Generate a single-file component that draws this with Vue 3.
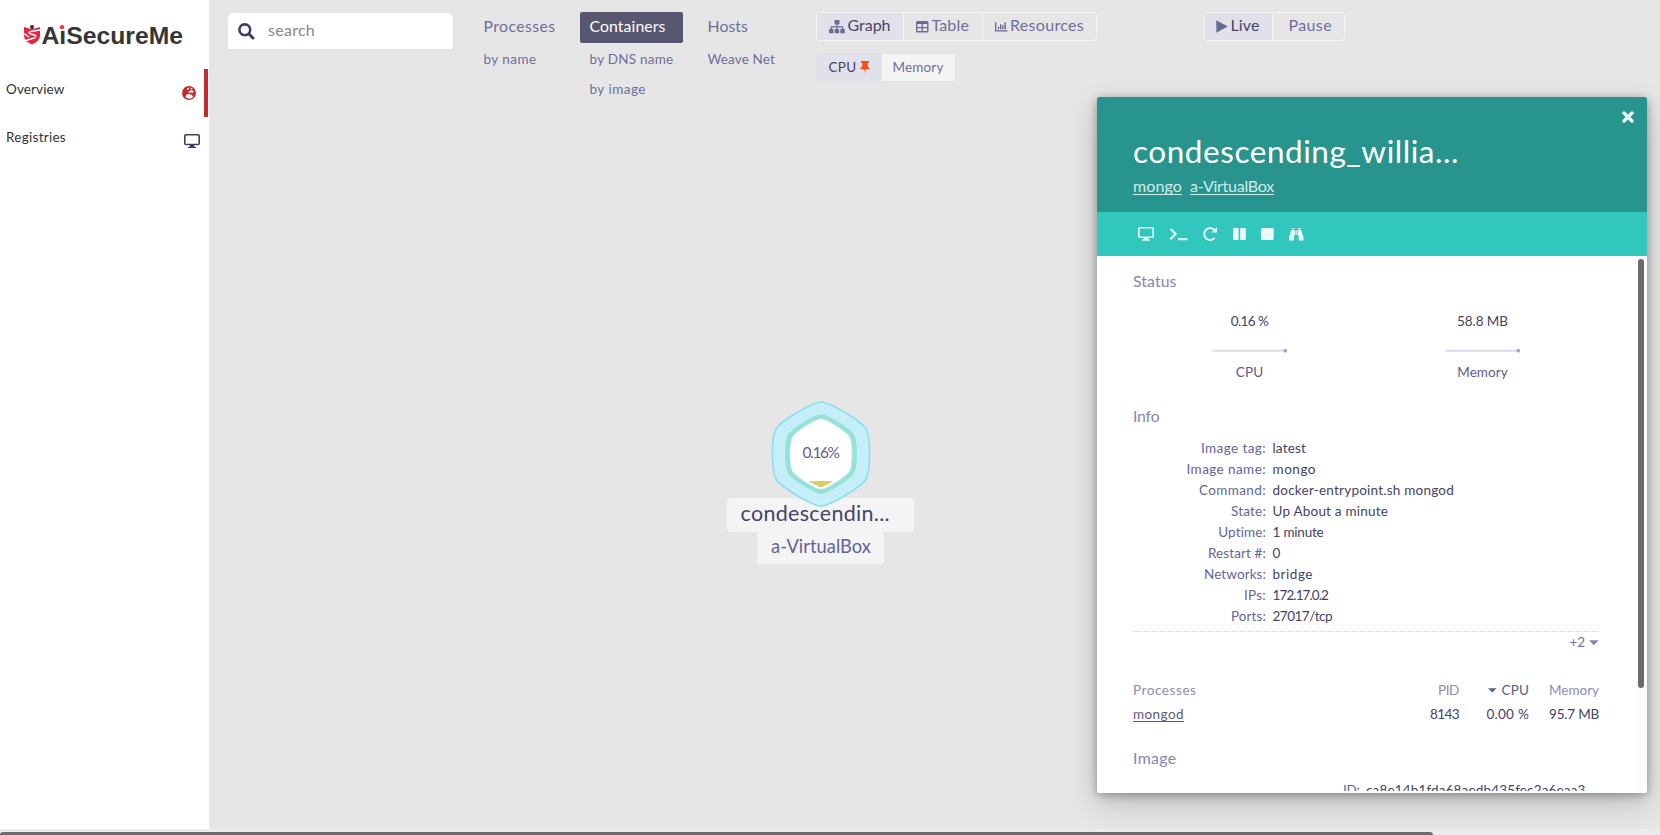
<script setup>
// Spreads a label's letters so that it fills the given width in pixels.
const vFit = {
  mounted(el, { value }) {
    const count = el.textContent.length
    const natural = el.getBoundingClientRect().width
    if (count && natural) el.style.letterSpacing = `${((value - natural) / count).toFixed(3)}px`
  },
}

const topologies = [
  { name: 'Processes', w: 72, subs: [{ name: 'by name', w: 53 }] },
  { name: 'Containers', w: 76, active: true, subs: [{ name: 'by DNS name', w: 84 }, { name: 'by image', w: 56.5 }] },
  { name: 'Hosts', w: 40.5, subs: [{ name: 'Weave Net', w: 67.5 }] },
]
const metrics = [
  { label: 'CPU', lw: 27.5, value: '0.16 %', vw: 37.5 },
  { label: 'Memory', lw: 50.5, value: '58.8 MB', vw: 51 },
]
const info = [
  { label: 'Image tag:', lw: 65, value: 'latest', vw: 33.5 },
  { label: 'Image name:', lw: 79.5, value: 'mongo', vw: 43.5 },
  { label: 'Command:', lw: 67, value: 'docker-entrypoint.sh mongod', vw: 181.5 },
  { label: 'State:', lw: 35, value: 'Up About a minute', vw: 115.5 },
  { label: 'Uptime:', lw: 48, value: '1 minute', vw: 51 },
  { label: 'Restart #:', lw: 58, value: '0', vw: 9 },
  { label: 'Networks:', lw: 62, value: 'bridge', vw: 40.5 },
  { label: 'IPs:', lw: 22, value: '172.17.0.2', vw: 55.5 },
  { label: 'Ports:', lw: 35, value: '27017/tcp', vw: 59.5 },
]
const hexPath = 'M0 -52 C8 -52 40 -33.5 45 -25 C49.8 -16 49.8 16 45 25 C40 33.5 8 52 0 52 C-8 52 -40 33.5 -45 25 C-49.8 16 -49.8 -16 -45 -25 C-40 -33.5 -8 -52 0 -52Z'
</script>

<template>
  <div class="page">
    <aside class="sidebar">
      <svg class="logo" width="170" height="30" viewBox="0 0 170 30">
        <path d="M1 7 L8 9 L9 6 L10 9 L17 7 L17 15 C17 20 13 23 9 24.500 C5 23 1 20 1 15Z" fill="#e9243d" />
        <circle cx="9" cy="7" r="2" fill="#333" />
        <path d="M17 10 L8 11.500 Q4 12.500 8 14 L12 15.200 Q14 16.500 11 18 L3 20.500 M1 13.500 L6 17" fill="none" stroke="#fff" stroke-width="1.500" />
        <text class="logo-text" x="18.500" y="23.500" textLength="141.500" lengthAdjust="spacingAndGlyphs">AiSecureMe</text>
        <rect x="35.800" y="4" width="6" height="5" fill="#fff" />
        <circle cx="39" cy="7.200" r="2.100" fill="#f0323c" />
      </svg>
      <a class="side-item active">
        <span v-fit="58.5">Overview</span>
        <svg class="ico-globe" width="14" height="14" viewBox="0 0 14 14">
          <circle cx="7" cy="7" r="7" fill="#c62c2b" />
          <path d="M5 2.200L7.200 1.400L6.600 3.300L5 4.300z M8.300 1.600L10.800 2.700L9.200 3.800z M7 5L9.500 4.200L11.600 5L11 6.800L8.600 6.400L6.600 7.200z M4.200 8.800L6.600 8L10 9L11.200 11L9 12.600H5.800L3.600 11z" fill="#fff" />
        </svg>
      </a>
      <a class="side-item">
        <span v-fit="60">Registries</span>
        <svg class="ico-desktop" width="16" height="15" viewBox="0 0 16 15">
          <rect x=".8" y=".8" width="14.400" height="9.700" rx="1" fill="none" stroke="#3f3f66" stroke-width="1.600" />
          <path d="M6 11h4l.6 2H12v1H4v-1h1.400z" fill="#3f3f66" />
        </svg>
      </a>
    </aside>

    <main class="scope">
      <header class="topbar">
        <div class="search">
          <svg width="17" height="17" viewBox="0 0 17 17" fill="none" stroke="#3f3f66">
            <circle cx="6.800" cy="6.800" r="5.400" stroke-width="2.600" />
            <path d="M11 11 L15 15" stroke-width="3" stroke-linecap="round" />
          </svg>
          <span v-fit="47">search</span>
        </div>
        <nav class="topologies">
          <div v-for="t in topologies" :key="t.name" class="topology">
            <div class="topo-main" :class="{ active: t.active }"><span v-fit="t.w">{{ t.name }}</span></div>
            <div v-for="s in t.subs" :key="s.name" class="topo-sub"><span v-fit="s.w">{{ s.name }}</span></div>
          </div>
        </nav>
        <div class="views">
          <div class="segments">
            <div class="segment on graph">
              <svg width="16" height="14" viewBox="0 0 16 14" fill="#6a6a99">
                <rect x="5.500" y="0" width="5" height="4.500" rx=".7" />
                <path d="M7.400 4h1.200v2.300h5.600v3H13V7.500H8.600v2H7.400v-2H3v2H1.800V6.300h5.600z" />
                <rect y="9" width="4.500" height="4.300" rx=".7" /><rect x="5.700" y="9" width="4.500" height="4.300" rx=".7" /><rect x="11.300" y="9" width="4.500" height="4.300" rx=".7" />
              </svg>
              <span v-fit="43">Graph</span>
            </div>
            <div class="segment table">
              <svg width="13" height="12" viewBox="0 0 13 12">
                <rect width="12.500" height="11.500" rx="1.500" fill="#6a6a99" />
                <path d="M1.400 3h4.200v2.900H1.400zM6.900 3h4.200v2.900H6.900zM1.400 7.200h4.200v2.900H1.400zM6.900 7.200h4.200v2.900H6.900z" fill="#e6e6e6" />
              </svg>
              <span v-fit="37.5">Table</span>
            </div>
            <div class="segment resources">
              <svg width="13" height="11" viewBox="0 0 13 11" fill="#6a6a99">
                <path d="M0 1h1.300v8.300H12.500v1.200H0zM2.800 5.700h1.400v2.600H2.800zM5 3.200h1.400v5.100H5zM7.200 4.200h1.400v4.100H7.200zM9.400 1.200h1.500v7.100H9.400z" />
              </svg>
              <span v-fit="74">Resources</span>
            </div>
          </div>
          <div class="segments metric-row">
            <div class="segment on cpu">
              <span v-fit="28">CPU</span>
              <svg width="10" height="13" viewBox="0 0 10 13" fill="#fb4b16">
                <path d="M1 0h8v1.500L7.700 2v3.400Q9.600 6.300 9.800 8.300H5.700L5 12.500L4.400 8.300H.1Q.4 6.300 2.300 5.400V2L1 1.500z" />
              </svg>
            </div>
            <div class="segment memory"><span v-fit="51">Memory</span></div>
          </div>
        </div>
        <div class="segments time">
          <div class="segment on live">
            <svg width="12" height="13" viewBox="0 0 12 13"><path d="M.3.2L11.800 6.500L.3 12.800z" fill="#6a6a99" /></svg>
            <span v-fit="29">Live</span>
          </div>
          <div class="segment pause"><span v-fit="43.5">Pause</span></div>
        </div>
      </header>

      <div class="node">
        <div class="node-label"><span v-fit="149.5">condescendin...</span></div>
        <div class="node-minor"><span v-fit="100">a-VirtualBox</span></div>
        <svg class="node-shape" width="104" height="110" viewBox="-52 -55 104 110">
          <path :d="hexPath" fill="#bef0fa" fill-opacity=".85" stroke="#8bdff1" stroke-width="1.600" />
          <path :d="hexPath" transform="scale(.755 .785)" fill="#c9f5f0" />
          <path :d="hexPath" transform="scale(.74 .77)" fill="#96e2da" />
          <path :d="hexPath" transform="scale(.635 .675)" fill="#fff" stroke="#e4eeee" stroke-width="1" />
          <path d="M-12.500 27H12.500Q6 31 2 32.800Q0 33.600 -2 32.800Q-6 31 -12.500 27z" fill="#dccb68" />
          <text class="node-value" x="-18.500" y="3.800" textLength="37.500">0.16%</text>
        </svg>
      </div>
    </main>

    <section class="panel">
      <header class="panel-head">
        <svg class="close" width="12" height="12" viewBox="0 0 12 12"><path d="M2 2L10 10M10 2L2 10" stroke="#eaf7f6" stroke-width="3.300" stroke-linecap="round" /></svg>
        <h1><span v-fit="326">condescending_willia...</span></h1>
        <div class="parents"><a v-fit="49">mongo</a><a v-fit="84">a-VirtualBox</a></div>
      </header>
      <div class="controls">
        <svg width="16" height="14" viewBox="0 0 16 14">
          <rect x=".8" y=".8" width="14.400" height="9.400" rx="1" fill="none" stroke="#eafaf9" stroke-width="1.600" />
          <path d="M6 10.500h4l.5 2H12v1.300H4v-1.300h1.500z" fill="#eafaf9" />
        </svg>
        <svg class="c-term" width="19" height="14" viewBox="0 0 19 14" fill="none" stroke="#eafaf9" stroke-width="2"><path d="M1.500 1.700L6.700 7L1.500 12.300M9 12.300H18.500" /></svg>
        <svg class="c-restart" width="15" height="14" viewBox="0 0 15 14">
          <path d="M11.600 10.900A5.900 5.900 0 1 1 11.200 2.800" fill="none" stroke="#eafaf9" stroke-width="1.900" />
          <path d="M14 0V5.600H8.400z" fill="#eafaf9" />
        </svg>
        <svg class="c-pause" width="13" height="12" viewBox="0 0 13 12" fill="#eafaf9"><rect width="5.600" height="12" rx=".8" /><rect x="7.200" width="5.600" height="12" rx=".8" /></svg>
        <svg class="c-stop" width="13" height="12" viewBox="0 0 13 12"><rect width="12.700" height="12" rx=".9" fill="#eafaf9" /></svg>
        <svg class="c-find" width="15" height="13" viewBox="0 0 15 13" fill="#eafaf9">
          <path d="M2.800 0h2.700v1.200H2.800zM9 0h2.700v1.200H9zM2.300 1.900h3.500v5.500L4.800 8v4.500H0V9.500zM8.700 1.900H12.200l2.300 7.600v3H9.700V8L8.700 7.400zM6.500 2.500h1.500v4H6.500z" />
        </svg>
      </div>
      <div class="panel-body">
        <div class="content">
          <h2><span v-fit="43.5">Status</span></h2>
          <div class="metrics">
            <div v-for="m in metrics" :key="m.label" class="metric">
              <div class="dark"><span v-fit="m.vw">{{ m.value }}</span></div>
              <svg width="76" height="10" viewBox="0 0 76 10">
                <path d="M.5 4.700H73" stroke="#dcdbea" stroke-width="2" /><circle cx="73.300" cy="4.700" r="1.900" fill="#aaa3cc" />
              </svg>
              <div><span v-fit="m.lw">{{ m.label }}</span></div>
            </div>
          </div>
          <h2 class="info-title"><span v-fit="26.5">Info</span></h2>
          <dl class="info">
            <div v-for="row in info" :key="row.label">
              <dt><span v-fit="row.lw">{{ row.label }}</span></dt>
              <dd><span v-fit="row.vw">{{ row.value }}</span></dd>
            </div>
          </dl>
          <div class="more">
            <span v-fit="15.5">+2</span>
            <svg width="10" height="6" viewBox="0 0 10 6"><path d="M0 .3H9.600L4.800 5.300z" fill="#8585b3" /></svg>
          </div>
          <div class="processes">
            <div class="row head">
              <span v-fit="63.5">Processes</span>
              <span v-fit="21">PID</span>
              <div class="sorted">
                <svg width="9" height="5" viewBox="0 0 9 5"><path d="M0 .2H8.600L4.300 4.600z" fill="#5b5b88" /></svg>
                <span v-fit="27.5">CPU</span>
              </div>
              <span v-fit="50">Memory</span>
            </div>
            <div class="row dark">
              <a v-fit="51">mongod</a>
              <span v-fit="29">8143</span>
              <span v-fit="42.5">0.00 %</span>
              <span v-fit="50">95.7 MB</span>
            </div>
          </div>
          <h2 class="image-title"><span v-fit="43.5">Image</span></h2>
          <dl class="info image-info">
            <div>
              <dt><span v-fit="16.5">ID:</span></dt>
              <dd><span v-fit="219.5">ca8e14b1fda68aedb435fec2a6eaa3</span></dd>
            </div>
          </dl>
        </div>
        <div class="track"><div class="thumb"></div></div>
      </div>
    </section>

    <div class="hscroll"><div class="hthumb"></div></div>
  </div>
</template>

<style>
body { margin: 0; overflow: hidden; }
</style>

<style scoped>
* { box-sizing: border-box; }
svg { display: block; flex: none; }
span, a { display: inline-block; white-space: nowrap; flex: none; }
h1, h2, dl, dt, dd { margin: 0; font-weight: 400; }
.page {
  position: relative;
  display: grid;
  grid-template: 829px 6px / 209px 1fr;
  width: 1660px;
  height: 835px;
  overflow: hidden;
  background: #e6e6e6;
  color: #5b5b88;
  font: 13.5px/20px Lato, "Open Sans", sans-serif;
}
.sidebar { background: #fff; }
.logo { margin: 20px 0 19px 23px; }
.logo-text { font: bold 24.5px "Liberation Sans", sans-serif; fill: #363636; }
.sidebar .side-item {
  display: flex;
  justify-content: space-between;
  width: 208px;
  height: 48px;
  padding: 10px 4px 0 6px;
  color: #333;
  border-right: 4px solid transparent;
}
.sidebar .side-item.active { border-color: #c62c2b; }
.ico-globe { margin: 7px 4px 0 0; }
.ico-desktop { margin: 7px 0 0; }

.scope { position: relative; }
.topbar { display: flex; align-items: flex-start; padding: 12px 0 0 19px; }
.search {
  display: flex;
  width: 226px;
  height: 37px;
  margin-top: 1px;
  padding: 10px 0 0 10px;
  gap: 13px;
  border-radius: 6px 6px 2px 2px;
  border: solid #dfdfec;
  border-width: 0 1px 1px 0;
  background: #fff;
  color: #888;
  font-size: 16px;
  line-height: 16px;
}
.search span { margin-top: -1px; }
.topologies { display: flex; margin-left: 19.5px; font-size: 13.5px; color: #6e6e9c; }
.topology:nth-child(2), .topology:nth-child(3) { margin-left: 15px; }
.topology { width: 91px; }
.topology:nth-child(2) { width: 103px; }
.topo-main { height: 31px; padding: 4px 10px 0; border-radius: 2px; font-size: 15.8px; }
.topo-main.active { background: #575670; color: #fff; }
.topo-sub { height: 30px; padding: 6px 10px 0; }
.views { margin-left: 27px; }
.segments {
  display: flex;
  width: max-content;
  height: 29px;
  border: 1px solid #f4f4f5;
  border-radius: 3px;
  color: #6e6e9c;
  font-size: 16px;
  line-height: 23px;
}
.segment { display: flex; align-items: flex-start; padding-left: 12px; }
.segment + .segment { border-left: 1px solid #f4f4f5; }
.segment.on { background: #e1e1ea; color: #464666; }
.graph { width: 86px; gap: 3px; }
.graph svg { margin-top: 7px; }
.table { width: 79px; gap: 3px; }
.table svg { margin-top: 8px; }
.resources { width: 114px; gap: 2.5px; }
.resources svg { margin-top: 8px; }
.metric-row { margin-top: 12px; border-color: #e1e1ea; font-size: 13.5px; line-height: 27px; }
.metric-row .segment + .segment { border: 0; }
.cpu { width: 65px; gap: 3px; }
.cpu svg { margin-top: 7px; }
.memory { width: 73px; padding-left: 11px; background: #f4f4f5; }
.time { margin-left: 107px; }
.live { width: 67px; padding-left: 11px; gap: 3px; }
.live svg { margin-top: 7px; }
.pause { width: 72px; padding-left: 16px; }

.node { position: absolute; left: 518px; top: 399px; width: 187px; }
.node-label, .node-minor { background: #f4f4f5; border-radius: 3px; }
.node-label { margin-top: 99px; height: 34px; padding: 0 13.5px; color: #444466; font-size: 21.5px; line-height: 30px; }
.node-minor { width: 127px; height: 32px; margin-left: 30px; padding-left: 14px; color: #62629a; font-size: 18.3px; line-height: 29px; }
.node-shape { position: absolute; left: 42px; top: 0; }
.node-value { font-size: 15.5px; fill: #5f5f94; }

.panel {
  position: absolute;
  left: 1097px;
  top: 97px;
  width: 550px;
  height: 696px;
  border-radius: 2px;
  background: #fff;
  box-shadow: 0 10px 30px rgba(0, 0, 0, .19), 0 2px 10px rgba(0, 0, 0, .32);
}
.panel-head { position: relative; height: 115px; padding: 36px 0 0 36px; border-radius: 2px 2px 0 0; background: #27958e; color: #fff; }
.close { position: absolute; right: 13.5px; top: 13.5px; }
h1 { height: 38px; font-size: 31.5px; line-height: 36px; }
.parents { display: flex; gap: 8px; margin-top: 6px; font-size: 16px; line-height: 18px; color: #d2ebe9; }
.parents a { height: 18px; border-bottom: 1px solid #d2ebe9; line-height: 18px; }
.controls { display: flex; align-items: center; height: 44px; padding-left: 41px; background: #31c7bd; }
.c-term, .c-restart, .c-pause, .c-stop, .c-find { margin-left: 15px; }

.panel-body { display: flex; height: 535px; overflow: hidden; }
.content { flex: none; width: 538px; padding: 15px 36px 0; }
h2 { height: 20px; color: #8686b0; font-size: 15.8px; }
.dark { color: #434364; }
.metrics { display: grid; grid-template-columns: 1fr 1fr; margin-top: 20px; }
.metric { display: flex; flex-direction: column; align-items: center; }
.metric svg { margin: 15px 0 6px; }
.info-title { margin-top: 24px; }
.info { margin-top: 12px; }
.info > div { display: grid; grid-template-columns: 133px 1fr; column-gap: 6.5px; height: 21px; line-height: 21px; }
.info dt { text-align: right; color: #65659a; }
.info dd { color: #434364; }
.more { display: flex; justify-content: flex-end; align-items: flex-start; gap: 4px; height: 19px; margin-top: 4px; border-top: 1px dotted #d5d5d8; color: #7272a2; line-height: 20px; }
.more svg { margin-top: 8px; }
.processes { margin-top: 28px; }
.row { display: grid; grid-template-columns: 1fr 60px 70px 70px; height: 24px; line-height: 24px; justify-items: end; }
.row > :first-child { justify-self: start; }
.head { color: #8c8cb6; }
.sorted { display: flex; align-items: center; gap: 5px; color: #5b5b88; }
.row a { height: 20px; color: #5b5b78; border-bottom: 1px solid #5b5b78; }
.image-title { margin-top: 22px; }
.image-info { margin-top: 12px; }
.image-info > div { grid-template-columns: 226.5px 1fr; }
.track { width: 12px; padding: 3px 3px 0; background: #fcfcfc; }
.thumb { height: 429px; border-radius: 3px; background: #6b6b6b; }

.hscroll { grid-column: 1 / 3; padding-top: 3px; background: #ebebeb; }
.hthumb { width: 1433px; height: 6px; border-radius: 3px; background: #6b6b6b; }
</style>
